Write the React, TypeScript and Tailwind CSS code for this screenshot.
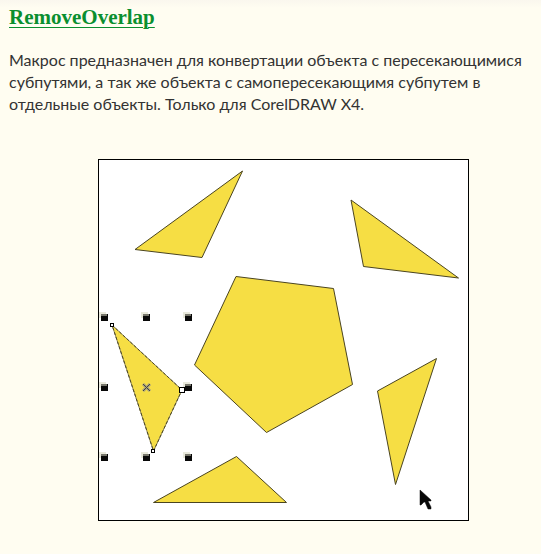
const shapes = [
  '37,90.5 144.5,12 104,98.5',
  '253,41 265.5,107.5 360.5,119',
  '138,117.5 235.5,129.5 254.5,225.5 168.5,273.5 96.5,206',
  '279.5,232 338.5,199.5 297.5,325.5',
  '55.5,343.5 138.5,297.5 188.5,343.5',
];

const handles = [
  [3, 155],
  [45, 155],
  [87, 155],
  [3, 225],
  [87, 225],
  [3, 295],
  [45, 295],
  [87, 295],
];

function Handle({ x, y }: { x: number; y: number }) {
  return (
    <g shapeRendering="crispEdges">
      <rect x={x - 2} y={y - 2} width="7" height="6" fill="#e9e9dc" />
      <rect x={x} y={y} width="7" height="7" fill="#080808" />
      <rect x={x} y={y} width="6" height="2" fill="#77776c" />
    </g>
  );
}

function Drawing() {
  return (
    <svg
      viewBox="0 0 371 362"
      className="block w-full"
      role="img"
      aria-label="RemoveOverlap"
    >
      <rect x="0.5" y="0.5" width="370" height="361" fill="#ffffff" stroke="#000000" />
      <g fill="#f6de44" stroke="#4a4420" strokeWidth="1">
        {shapes.map((points) => (
          <polygon key={points} points={points} />
        ))}
      </g>
      <polygon points="14,166 84,231 55.5,292" fill="#f6de44" stroke="#8f8752" />
      <polygon
        points="14,166 84,231 55.5,292"
        fill="none"
        stroke="#4b4626"
        strokeDasharray="3 2"
      />
      {handles.map(([x, y]) => (
        <Handle key={`${x}-${y}`} x={x} y={y} />
      ))}
      <g fill="#ffffff" stroke="#000000" shapeRendering="crispEdges">
        <rect x="12.5" y="164.5" width="3" height="3" />
        <rect x="81.5" y="228.5" width="5" height="5" />
        <rect x="53.5" y="290.5" width="3" height="3" />
      </g>
      <path d="M45 225l7 7M52 225l-7 7" stroke="#a8a27c" strokeWidth="3" />
      <path d="M45 225l7 7M52 225l-7 7" stroke="#44443c" strokeWidth="1" />
      <path
        d="M322 331v15h1l3-3h1l3 7h3v-2l-3-6h3v-1z"
        fill="#080808"
        stroke="#080808"
        strokeWidth="0.5"
      />
    </svg>
  );
}

export default function App() {
  return (
    <main className="min-h-screen bg-[#fffdf1] bg-linear-to-b from-[#faf7ee] to-[#fffdf1] to-[8px] px-[9px] pt-1 pb-8 text-[#333333]">
      <h2 className="font-['Liberation_Serif',serif] text-[21px] leading-[26px] font-bold text-[#0a8f2f]">
        <a href="#remove-overlap" className="underline decoration-1 underline-offset-3">
          RemoveOverlap
        </a>
      </h2>
      <p className="mt-[19px] font-[Lato,'Open_Sans',sans-serif] text-[16px] leading-[22px]">
        Макрос предназначен для конвертации объекта с пересекающимися
        субпутями, а так же объекта с самопересекающимя субпутем в
        отдельные объекты. Только для CorelDRAW X4.
      </p>
      <figure className="mt-11 ml-[89px] max-w-[371px]">
        <Drawing />
      </figure>
    </main>
  );
}
